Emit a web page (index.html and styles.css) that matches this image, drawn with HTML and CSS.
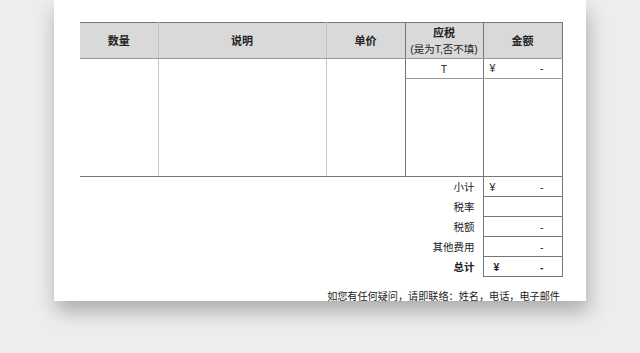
FILE: index.html
```html
<!DOCTYPE html>
<html lang="zh-CN">
<head>
    <meta charset="UTF-8">
    <meta name="viewport" content="width=device-width, initial-scale=1.0">
    <title>发票</title>
    <link rel="stylesheet" href="styles.css">
</head>
<body>
    <div class="sheet">
        <table class="invoice">
            <colgroup>
                <col class="c-qty">
                <col class="c-desc">
                <col class="c-price">
                <col class="c-tax">
                <col class="c-amount">
            </colgroup>
            <thead>
                <tr>
                    <th class="soft">数量</th>
                    <th class="soft">说明</th>
                    <th>单价</th>
                    <th class="tax-head">应税<br><span>(是为T,否不填)</span></th>
                    <th>金额</th>
                </tr>
            </thead>
            <tbody>
                <tr class="item">
                    <td class="soft" rowspan="2"></td>
                    <td class="soft" rowspan="2"></td>
                    <td rowspan="2"></td>
                    <td class="taxable">T</td>
                    <td class="money"><span>¥</span><span>-</span></td>
                </tr>
                <tr class="blank">
                    <td></td>
                    <td></td>
                </tr>
            </tbody>
            <tfoot>
                <tr>
                    <td class="label" colspan="4">小计</td>
                    <td class="money"><span>¥</span><span>-</span></td>
                </tr>
                <tr>
                    <td class="label" colspan="4">税率</td>
                    <td class="money"></td>
                </tr>
                <tr>
                    <td class="label" colspan="4">税额</td>
                    <td class="money"><span></span><span>-</span></td>
                </tr>
                <tr>
                    <td class="label" colspan="4">其他费用</td>
                    <td class="money"><span></span><span>-</span></td>
                </tr>
                <tr class="total">
                    <td class="label" colspan="4">总计</td>
                    <td class="money"><span>¥</span><span>-</span></td>
                </tr>
            </tfoot>
        </table>
        <p class="contact">如您有任何疑问，请即联络：姓名，电话，电子邮件</p>
    </div>
</body>
</html>
```

FILE: styles.css
```css
html,
body {
    height: 100%;
}
body {
    margin: 0;
    background-color: #ededed;
    font-family: "Liberation Sans", "Noto Sans CJK SC", sans-serif;
    color: #222;
}
.sheet {
    width: 532px;
    height: 301px;
    margin-left: 54px;
    padding: 22px 0 0 26px;
    box-sizing: border-box;
    background-color: #fff;
    box-shadow: 4px 12px 18px rgba(0, 0, 0, 0.22), -6px 6px 16px rgba(0, 0, 0, 0.06);
}
.invoice {
    border-collapse: collapse;
    table-layout: fixed;
    width: 482px;
    font-size: 10.5px;
    color: #222;
}
.c-qty { width: 78px; }
.c-desc { width: 168px; }
.c-price { width: 79px; }
.c-tax { width: 78px; }
.c-amount { width: 79px; }

.invoice th,
.invoice td {
    padding: 0;
    border-right: 1px solid #777;
}
.invoice .soft {
    border-right-color: #c4c4c4;
}
.invoice th {
    height: 35px;
    background-color: #d9d9d9;
    border-top: 1px solid #777;
    border-bottom: 1px solid #999;
    font-size: 11px;
    font-weight: bold;
    line-height: 16px;
}
.tax-head span {
    font-weight: normal;
    font-size: 10.5px;
}
.item td {
    height: 19px;
}
.taxable {
    text-align: center;
    border-bottom: 1px solid #999;
}
.item .money {
    border-bottom: 1px solid #999;
}
.blank td {
    height: 97px;
}
tbody tr:last-child td,
tbody td[rowspan] {
    border-bottom: 1px solid #777;
}
.money span:first-child {
    padding-left: 6px;
}
.money span:last-child {
    float: right;
    padding-right: 18px;
}
.item .money span {
    line-height: 19px;
}
tfoot td {
    height: 19px;
}
tfoot .label {
    border-right: 1px solid #777;
    text-align: right;
    padding-right: 8px;
}
tfoot .money {
    border: 1px solid #777;
}
.total td {
    font-weight: bold;
}
.total .money span:first-child {
    padding-left: 10px;
}
.contact {
    margin: 11px 0 0;
    padding-right: 26px;
    text-align: right;
    font-size: 10.15px;
    color: #222;
}
```
